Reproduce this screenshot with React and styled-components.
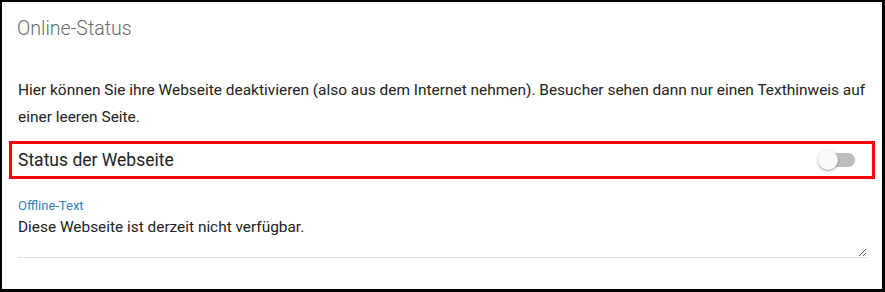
import React, { useState } from 'react';
import styled, { createGlobalStyle } from 'styled-components';

const GlobalStyle = createGlobalStyle`
  html, body {
    margin: 0;
    padding: 0;
    background: #fff;
  }
  body {
    font-family: Roboto, "Liberation Sans", Arial, sans-serif;
    color: #212121;
  }
`;

const App = () => {
  const [online, setOnline] = useState(false);
  const [text, setText] = useState('Diese Webseite ist derzeit nicht verfügbar.');

  return (
    <>
      <GlobalStyle />
      <Frame>
        <Title>Online-Status</Title>
        <Description>
          Hier können Sie ihre Webseite deaktivieren (also aus dem Internet nehmen). Besucher sehen dann nur einen
          Texthinweis auf einer leeren Seite.
        </Description>
        <StatusRow>
          <StatusLabel>Status der Webseite</StatusLabel>
          <Switch $checked={online} onClick={() => setOnline(!online)}>
            <Track $checked={online} />
            <Thumb $checked={online} />
          </Switch>
        </StatusRow>
        <Field>
          <FieldLabel>Offline-Text</FieldLabel>
          <TextArea value={text} onChange={(e) => setText(e.target.value)} rows={2} />
        </Field>
      </Frame>
    </>
  );
};

export default App;

const Frame = styled.div`
  box-sizing: border-box;
  width: 885px;
  height: 292px;
  border: 2px solid #000;
  border-right-width: 3px;
  border-bottom-width: 3px;
  padding: 0 7px;
  display: flex;
  flex-direction: column;
`;

const Title = styled.h2`
  margin: 15px 0 0;
  padding-left: 8px;
  font-size: 19.6px;
  line-height: 24px;
  font-weight: 300;
  color: #6b6b6b;
`;

const Description = styled.p`
  margin: 36px 0 0;
  padding: 0 9px;
  font-size: 15.45px;
  line-height: 27px;
  color: #222;
`;

const StatusRow = styled.div`
  box-sizing: border-box;
  margin-top: 10px;
  height: 38px;
  border: 3px solid #ff0000;
  padding: 0 17px 0 6px;
  display: flex;
  align-items: center;
  justify-content: space-between;
`;

const StatusLabel = styled.span`
  font-size: 17.5px;
  color: #222;
`;

const Switch = styled.span`
  position: relative;
  width: 34px;
  height: 14px;
  cursor: pointer;
`;

const Track = styled.span`
  display: block;
  width: 100%;
  height: 100%;
  border-radius: 7px;
  background: ${({ $checked }) => ($checked ? '#90caf9' : '#bdbdbd')};
`;

const Thumb = styled.span`
  position: absolute;
  top: -3px;
  left: ${({ $checked }) => ($checked ? '16px' : '-3px')};
  width: 20px;
  height: 20px;
  border-radius: 50%;
  background: ${({ $checked }) => ($checked ? '#1e88e5' : '#fafafa')};
  box-shadow: 0 1px 3px rgba(0, 0, 0, 0.3), 0 1px 1px rgba(0, 0, 0, 0.14);
  transition: left 0.15s ease;
`;

const Field = styled.div`
  margin: 20px 8px 0 9px;
  display: flex;
  flex-direction: column;
`;

const FieldLabel = styled.label`
  font-size: 13px;
  line-height: 14px;
  color: #2f7fc1;
`;

const TextArea = styled.textarea`
  box-sizing: border-box;
  margin-top: 4px;
  height: 41px;
  padding: 0;
  border: none;
  border-bottom: 1px solid #dedede;
  outline: none;
  resize: vertical;
  font-family: Roboto, "Liberation Sans", Arial, sans-serif;
  font-size: 15.4px;
  line-height: 20px;
  color: #222;
  background: transparent;
`;
